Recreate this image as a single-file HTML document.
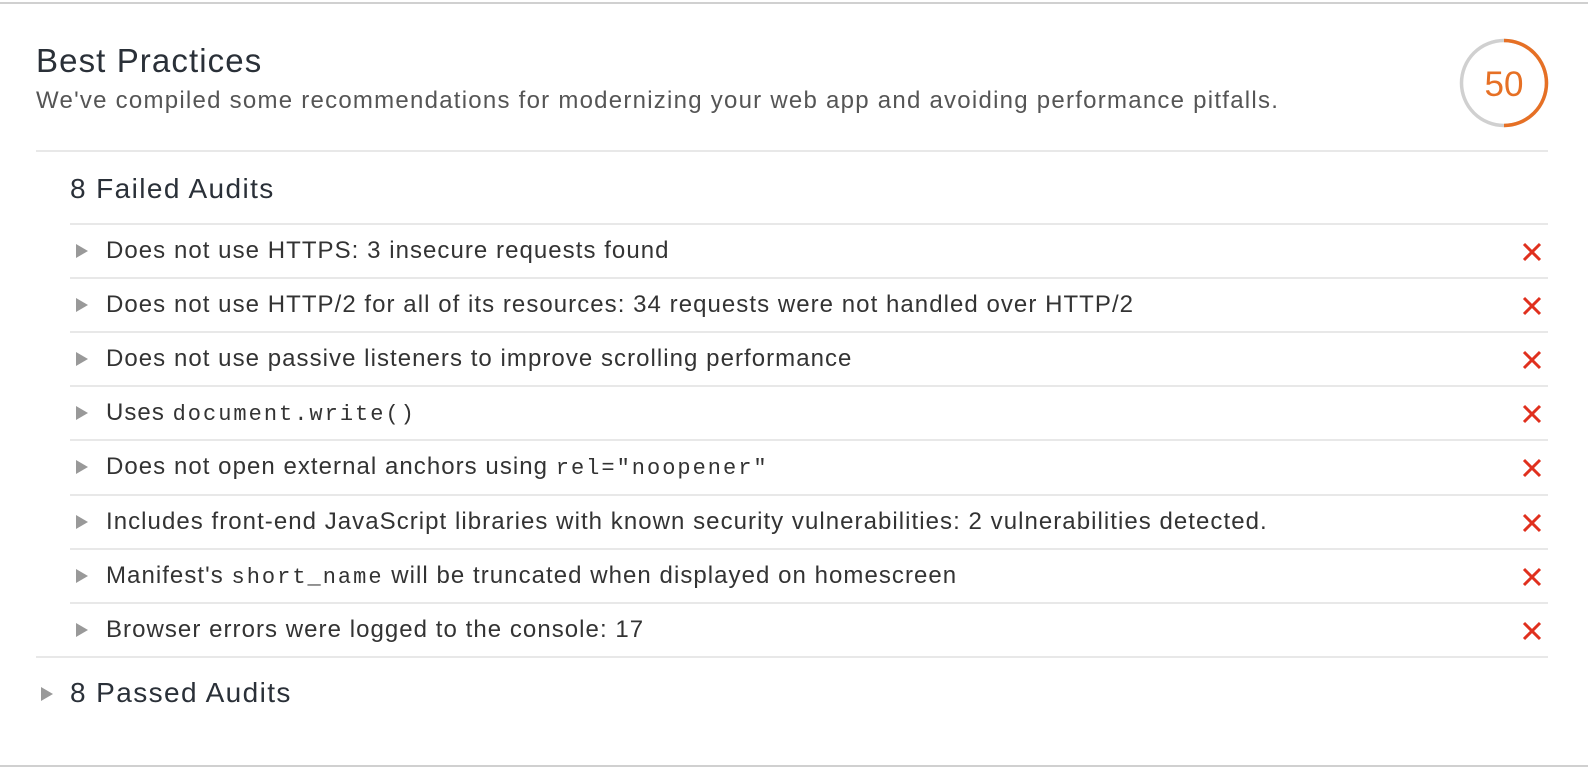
<!DOCTYPE html>
<html><head><style>
html,body{margin:0;padding:0;background:#fff;}
body{width:1588px;height:768px;position:relative;overflow:hidden;font-family:"Liberation Sans",Arial,sans-serif;}
.hl{position:absolute;left:0;width:1588px;height:2px;background:#d0d0d0;}
.title{position:absolute;left:36px;top:42px;font-size:33px;letter-spacing:1.1px;color:#2a3038;}
.desc{position:absolute;left:36px;top:87px;font-size:24px;letter-spacing:1.25px;color:#555;white-space:nowrap;}
.div{position:absolute;height:2px;background:#e8e8e8;}
.fa{position:absolute;left:70px;top:173px;font-size:28px;letter-spacing:1.4px;color:#2a3038;}
.row{position:absolute;left:70px;width:1478px;height:52px;}
.row .tri{position:absolute;left:6px;top:19px;width:0;height:0;border-left:12px solid #999;border-top:7px solid transparent;border-bottom:7px solid transparent;}
.row .t{position:absolute;left:36px;top:12px;font-size:24px;letter-spacing:1.05px;color:#333;white-space:nowrap;}
.row code{font-family:"Liberation Mono",monospace;font-size:22px;letter-spacing:2px;}
.row svg{position:absolute;left:1452px;top:17px;}
.pa{position:absolute;left:70px;top:677px;font-size:28px;letter-spacing:1.4px;color:#2a3038;}
.pt{position:absolute;left:41px;top:687px;border-left:12px solid #999;border-top:7px solid transparent;border-bottom:7px solid transparent;}
</style></head><body>
<div class="hl" style="top:2px"></div>
<div class="title">Best Practices</div>
<div class="desc">We've compiled some recommendations for modernizing your web app and avoiding performance pitfalls.</div>
<svg style="position:absolute;left:1458px;top:37px" width="92" height="92" viewBox="0 0 92 92">
<circle cx="46" cy="46" r="42.5" fill="none" stroke="#d0d0d0" stroke-width="3.5"/>
<path d="M46 3.5 A42.5 42.5 0 0 1 46 88.5" fill="none" stroke="#e67025" stroke-width="3.5"/>
<text x="46" y="59" text-anchor="middle" font-family="Liberation Sans,sans-serif" font-size="35" fill="#e67025">50</text>
</svg>
<div class="div" style="left:36px;width:1512px;top:150px"></div>
<div class="fa">8 Failed Audits</div>
<div class="div" style="left:70px;width:1478px;top:223px"></div>

<div class="row" style="top:225px"><div class="tri"></div><div class="t">Does not use HTTPS: 3 insecure requests found</div><svg width="20" height="20"><path d="M2 2L18 18M18 2L2 18" stroke="#e0301e" stroke-width="3"/></svg></div>
<div class="div" style="left:70px;width:1478px;top:277px"></div>
<div class="row" style="top:279px"><div class="tri"></div><div class="t">Does not use HTTP/2 for all of its resources: 34 requests were not handled over HTTP/2</div><svg width="20" height="20"><path d="M2 2L18 18M18 2L2 18" stroke="#e0301e" stroke-width="3"/></svg></div>
<div class="div" style="left:70px;width:1478px;top:331px"></div>
<div class="row" style="top:333px"><div class="tri"></div><div class="t">Does not use passive listeners to improve scrolling performance</div><svg width="20" height="20"><path d="M2 2L18 18M18 2L2 18" stroke="#e0301e" stroke-width="3"/></svg></div>
<div class="div" style="left:70px;width:1478px;top:385px"></div>
<div class="row" style="top:387px"><div class="tri"></div><div class="t">Uses <code>document.write()</code></div><svg width="20" height="20"><path d="M2 2L18 18M18 2L2 18" stroke="#e0301e" stroke-width="3"/></svg></div>
<div class="div" style="left:70px;width:1478px;top:439px"></div>
<div class="row" style="top:441px"><div class="tri"></div><div class="t">Does not open external anchors using <code>rel="noopener"</code></div><svg width="20" height="20"><path d="M2 2L18 18M18 2L2 18" stroke="#e0301e" stroke-width="3"/></svg></div>
<div class="div" style="left:70px;width:1478px;top:494px"></div>
<div class="row" style="top:496px"><div class="tri"></div><div class="t">Includes front-end JavaScript libraries with known security vulnerabilities: 2 vulnerabilities detected.</div><svg width="20" height="20"><path d="M2 2L18 18M18 2L2 18" stroke="#e0301e" stroke-width="3"/></svg></div>
<div class="div" style="left:70px;width:1478px;top:548px"></div>
<div class="row" style="top:550px"><div class="tri"></div><div class="t">Manifest's <code>short_name</code> will be truncated when displayed on homescreen</div><svg width="20" height="20"><path d="M2 2L18 18M18 2L2 18" stroke="#e0301e" stroke-width="3"/></svg></div>
<div class="div" style="left:70px;width:1478px;top:602px"></div>
<div class="row" style="top:604px"><div class="tri"></div><div class="t">Browser errors were logged to the console: 17</div><svg width="20" height="20"><path d="M2 2L18 18M18 2L2 18" stroke="#e0301e" stroke-width="3"/></svg></div>
<div class="div" style="left:36px;width:1512px;top:656px"></div>
<div class="pt"></div>
<div class="pa">8 Passed Audits</div>
<div class="hl" style="top:765px"></div>
</body></html>
